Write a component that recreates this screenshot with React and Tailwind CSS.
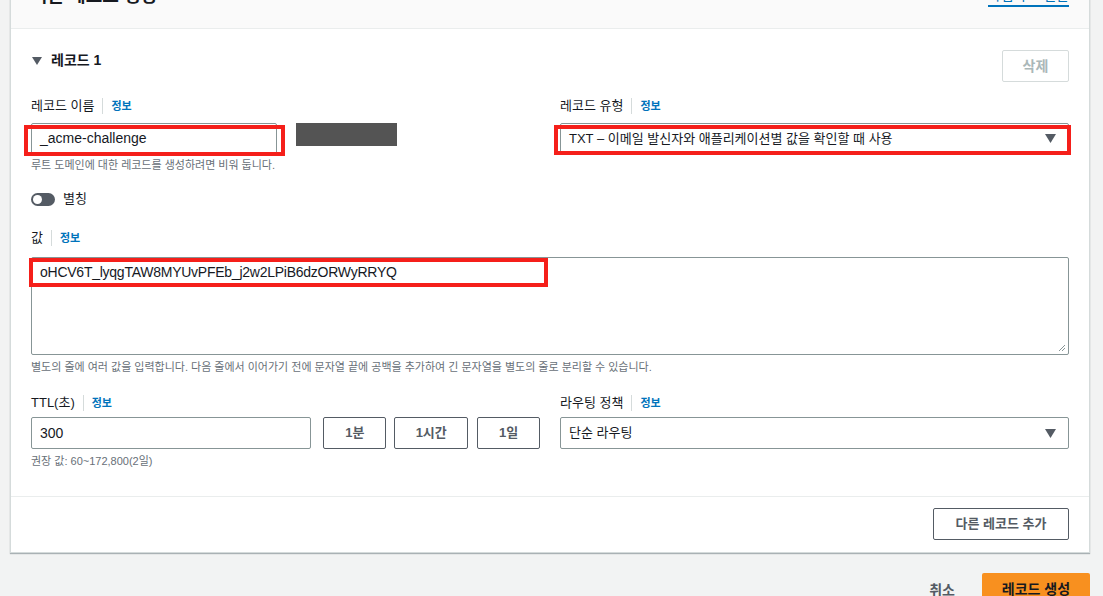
import React from "react";

const FONT = { fontFamily: '"Liberation Sans", "Noto Sans CJK KR", sans-serif' };

function Label({ text }) {
  return (
    <div className="flex items-center h-[20px] text-[13px] text-[#16191f]">
      <span>{text}</span>
      <span className="mx-[8px] w-px h-[16px] bg-[#d5dbdb]" />
      <span className="text-[11px] font-bold text-[#0073bb]">정보</span>
    </div>
  );
}

function Caret() {
  return (
    <svg width="11" height="9" viewBox="0 0 11 9" className="shrink-0">
      <path d="M0 0 H11 L5.5 9 Z" fill="#545b64" />
    </svg>
  );
}

function RedBox({ className }) {
  return <div className={"absolute border-[4px] border-[#f51f1a] pointer-events-none " + className} />;
}

export default function App() {
  return (
    <div style={FONT} className="w-[1103px] h-[596px] overflow-hidden bg-[#f2f3f3] text-[#16191f]">
      {/* card */}
      <div className="ml-[10px] w-[1080px] bg-white border-x border-b border-[#d5dbdb] shadow-[0_1px_1px_rgba(0,28,36,0.3)]">
        {/* header */}
        <div className="-mt-[20px] h-[49px] bg-[#fafafa] border-b border-[#eaeded] px-5 pt-[4px] flex justify-between items-start">
          <div className="text-[18px] leading-[24px] font-bold">빠른 레코드 생성</div>
          <div className="pt-[1px] text-[14px] leading-[20px] text-[#0073bb] border-b-2 border-[#0073bb]">마법사로 전환</div>
        </div>

        {/* body */}
        <div className="px-5 pt-[21px] pb-[27px]">
          <div className="flex justify-between items-start">
            <div className="flex items-center h-[20px] gap-[9px] pt-[1px]">
              <svg width="10" height="8" viewBox="0 0 10 8" className="ml-[1px]">
                <path d="M0 0 H10 L5 8 Z" fill="#545b64" />
              </svg>
              <span className="text-[14px] font-bold">레코드 1</span>
            </div>
            <div className="w-[67px] h-[32px] flex items-center justify-center border border-[#d5dbdb] rounded-[2px] text-[14px] font-bold text-[#aab7b8]">
              삭제
            </div>
          </div>

          <div className="grid grid-cols-2 gap-x-5 mt-[14px]">
            <div>
              <Label text="레코드 이름" />
              <div className="mt-[7px] flex items-start">
                <div className="relative">
                  <div className="w-[246px] h-[31px] border border-[#879596] rounded-[2px] flex items-center px-[8px] text-[14px]">
                    _acme-challenge
                  </div>
                  <RedBox className="left-[-7px] top-[2px] w-[261px] h-[31px]" />
                </div>
                <div className="ml-[19px] w-[101px] h-[23px] bg-[#545454]" />
              </div>
              <div className="mt-[3px] text-[11px] leading-[16px] text-[#687078]">루트 도메인에 대한 레코드를 생성하려면 비워 둡니다.</div>
            </div>
            <div>
              <Label text="레코드 유형" />
              <div className="mt-[7px] relative">
                <div className="h-[31px] border border-[#879596] rounded-[2px] flex items-center justify-between pl-[8px] pr-[12px] text-[13px]">
                  <span>TXT – 이메일 발신자와 애플리케이션별 값을 확인할 때 사용</span>
                  <Caret />
                </div>
                <RedBox className="left-[-6px] top-[2px] right-[-2px] h-[30px]" />
              </div>
            </div>
          </div>

          <div className="mt-[16px] flex items-center h-[20px]">
            <div className="w-[24px] h-[13px] rounded-full bg-[#545b64] flex items-center pl-[2px]">
              <div className="w-[9px] h-[9px] rounded-full bg-white" />
            </div>
            <span className="ml-[8px] text-[13px]">별칭</span>
          </div>

          <div className="mt-[19px]">
            <Label text="값" />
            <div className="mt-[9px] relative">
              <div className="h-[98px] border border-[#879596] rounded-[2px] px-[8px] pt-[4px] text-[14px] leading-[20px] tracking-[-0.25px] relative">
                oHCV6T_lyqgTAW8MYUvPFEb_j2w2LPiB6dzORWyRRYQ
                <svg width="8" height="8" viewBox="0 0 8 8" className="absolute right-[2px] bottom-[2px]">
                  <path d="M7 1 L1 7 M7 4 L4 7" stroke="#879596" strokeWidth="1" />
                </svg>
              </div>
              <RedBox className="left-[-2px] top-[1px] w-[519px] h-[29px]" />
            </div>
            <div className="mt-[4px] text-[11px] leading-[16px] text-[#687078]">
              별도의 줄에 여러 값을 입력합니다. 다음 줄에서 이어가기 전에 문자열 끝에 공백을 추가하여 긴 문자열을 별도의 줄로 분리할 수 있습니다.
            </div>
          </div>

          <div className="grid grid-cols-2 gap-x-5 mt-[18px]">
            <div>
              <Label text="TTL(초)" />
              <div className="mt-[4px] flex items-center h-[32px]">
                <div className="w-[281px] h-[32px] border border-[#879596] rounded-[2px] flex items-center px-[8px] text-[14px]">300</div>
                <div className="ml-[12px] w-[63px] h-[32px] border border-[#545b64] rounded-[2px] flex items-center justify-center text-[13px] font-bold text-[#545b64]">1분</div>
                <div className="ml-[8px] w-[74px] h-[32px] border border-[#545b64] rounded-[2px] flex items-center justify-center text-[13px] font-bold text-[#545b64]">1시간</div>
                <div className="ml-[9px] w-[63px] h-[32px] border border-[#545b64] rounded-[2px] flex items-center justify-center text-[13px] font-bold text-[#545b64]">1일</div>
              </div>
              <div className="mt-[4px] text-[11px] leading-[16px] text-[#687078]">권장 값: 60~172,800(2일)</div>
            </div>
            <div>
              <Label text="라우팅 정책" />
              <div className="mt-[4px] h-[32px] border border-[#879596] rounded-[2px] flex items-center justify-between pl-[8px] pr-[12px] text-[13px]">
                <span>단순 라우팅</span>
                <Caret />
              </div>
            </div>
          </div>
        </div>

        {/* footer */}
        <div className="border-t border-[#eaeded] px-5 pt-[11px] pb-[12px] flex justify-end">
          <div className="w-[136px] h-[32px] border border-[#545b64] rounded-[2px] flex items-center justify-center text-[13px] font-bold text-[#545b64]">
            다른 레코드 추가
          </div>
        </div>
      </div>

      {/* actions */}
      <div className="w-[1090px] mt-[20px] flex justify-end items-start">
        <div className="mt-[7px] mr-[27px] text-[14px] font-bold text-[#545b64]">취소</div>
        <div className="w-[108px] h-[32px] bg-[#f8901f] rounded-[2px] flex items-center justify-center text-[14px] font-bold text-[#16191f]">
          레코드 생성
        </div>
      </div>
    </div>
  );
}
